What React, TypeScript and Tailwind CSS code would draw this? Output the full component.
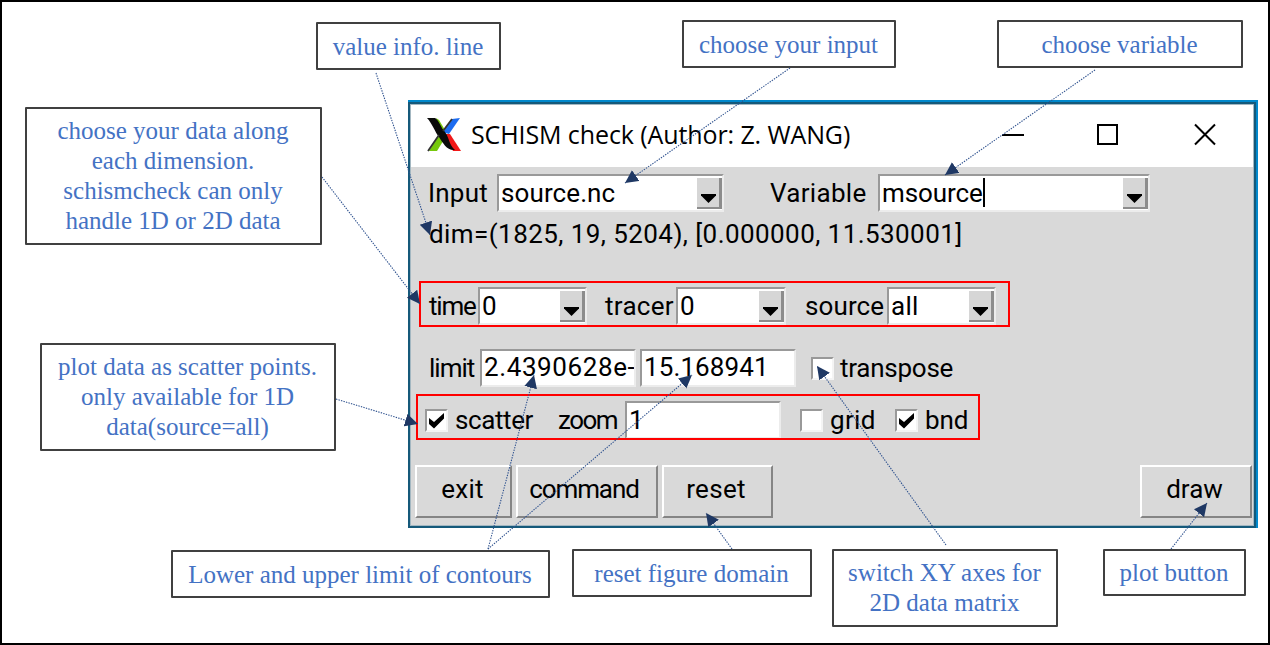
import type { ReactNode } from "react";

const INK = "#1f3864";

function Callout({ className, children }: { className: string; children: ReactNode }) {
  return (
    <div
      className={`absolute flex flex-col items-center justify-center whitespace-nowrap rounded-[1px] border-2 border-[#404040] bg-white pr-px text-center text-[25px] leading-[30px] text-[#4472c4] ${className}`}
    >
      {children}
    </div>
  );
}

function Label({ className, children }: { className: string; children: ReactNode }) {
  return <span className={`shrink-0 whitespace-nowrap pb-px ${className}`}>{children}</span>;
}

function Field({ className, children }: { className: string; children: ReactNode }) {
  return (
    <div
      className={`flex shrink-0 items-center overflow-hidden whitespace-nowrap border-2 border-b-[#ececec] border-l-[#999] border-r-[#ececec] border-t-[#999] bg-white pl-[2px] ${className}`}
    >
      {children}
    </div>
  );
}

function Combo({ className, children }: { className: string; children: ReactNode }) {
  return (
    <Field className={`h-[38px] justify-between ${className}`}>
      <span className="flex items-center pb-px">{children}</span>
      <span className="mt-px flex h-[31px] w-[25px] shrink-0 items-center justify-center border-b-2 border-r-[3px] border-[#8c8c8c] bg-[#d6d6d6]">
        <svg className="ml-px mt-[11px] h-[9px] w-[15px]" viewBox="0 0 15 9">
          <path d="M0 0H15V1.5L7.5 9L0 1.5Z" fill="#000" />
        </svg>
      </span>
    </Field>
  );
}

function Check({ checked = false, className = "" }: { checked?: boolean; className?: string }) {
  return (
    <span
      className={`flex h-[23px] w-[23px] shrink-0 items-center justify-center border-2 border-b-[#f4f4f4] border-l-[#999] border-r-[#f4f4f4] border-t-[#999] bg-white ${className}`}
    >
      {checked && (
        <svg className="mt-px h-[16px] w-[17px]" viewBox="0 0 17 16">
          <path d="M1 5L6 9L16 0V5.5L6 15.5L1 11Z" fill="#000" />
        </svg>
      )}
    </span>
  );
}

function Button({ className, children }: { className: string; children: ReactNode }) {
  return (
    <button
      className={`flex h-[53px] items-center justify-center border-2 border-b-[#858585] border-l-white border-r-[#858585] border-t-white pb-[5px] pr-[2px] ${className}`}
    >
      {children}
    </button>
  );
}

const arrows = [
  [376, 73, 430, 235],
  [790, 68, 625, 183],
  [1095, 70, 945, 175],
  [322, 177, 420, 304],
  [336, 399, 418, 424],
  [488, 549, 534, 375],
  [488, 549, 692, 375],
  [946, 545, 817, 366],
  [732, 549, 706, 513],
  [1171, 549, 1207, 503],
];

function Arrows() {
  return (
    <svg className="pointer-events-none absolute inset-0 h-[645px] w-[1270px]" viewBox="0 0 1270 645">
      <defs>
        <marker id="head" markerUnits="userSpaceOnUse" markerWidth="14" markerHeight="14" refX="13" refY="6.5" orient="auto">
          <path d="M0 0L13 6.5L0 13Z" fill={INK} />
        </marker>
      </defs>
      {arrows.map(([x1, y1, x2, y2]) => (
        <line
          key={`${x1}-${x2}`}
          x1={x1}
          y1={y1}
          x2={x2}
          y2={y2}
          stroke="#2f528f"
          strokeWidth="1.1"
          strokeDasharray="1.4 1.2"
          markerEnd="url(#head)"
        />
      ))}
    </svg>
  );
}

function XLogo() {
  return (
    <svg className="-mt-[3px] h-[35px] w-[34px] shrink-0" viewBox="0 0 34 35">
      <path d="M25 2L33 1L22 17L15 15Z" fill="#1c6cf0" />
      <path d="M12 17L18 21L10 34H2Z" fill="#76c80c" />
      <path d="M9 1L12 3L18 13L14 14Z" fill="#76c80c" />
      <path d="M18 17L23 17L34 34H26Z" fill="#f01818" />
      <path d="M0 1H8C12 3 14 11 18 15C22 20 22 28 28 33C20 34 16 26 12 20C8 15 5 6 0 1Z" fill="#0a0a0a" />
      <path d="M25 2L16 14M1 34L12 18" stroke="#333" strokeWidth="1.8" />
    </svg>
  );
}

function Window() {
  return (
    <div className="absolute left-[408px] top-[100px] h-[428px] w-[850px] border-r-2 border-t-2 border-[#0088cc] font-[Roboto,sans-serif] text-[26px] leading-[30px] tracking-[0.3px] text-black">
      <div className="flex h-[426px] flex-col border-2 border-[#15597a] bg-[#d9d9d9] shadow-[inset_0_0_0_1px_#a3b7c1]">
        <div className="mx-px mt-px flex h-[62px] shrink-0 items-center bg-white pb-px pl-[16px]">
          <XLogo />
          <span className="-mt-[3px] ml-[10px] w-[380px] whitespace-nowrap font-['Open_Sans',sans-serif] text-[25px] tracking-[-0.1px]">
            SCHISM check (Author: Z. WANG)
          </span>
          <svg className="-mt-[3px] ml-[151px] h-[24px] w-[216px] shrink-0" viewBox="0 0 216 24" fill="none" stroke="#000" strokeWidth="2">
            <path d="M0 13H22" />
            <rect x="96" y="3" width="19" height="19" />
            <path d="M193 2.5L213 22.5M213 2.5L193 22.5" />
          </svg>
        </div>

        <div className="mt-[7px] flex h-[38px] shrink-0 items-center pl-[18px]">
          <Label className="w-[69px] tracking-[0.2px]">Input</Label>
          <Combo className="w-[227px] tracking-[0.1px]">source.nc</Combo>
          <Label className="ml-[46px] w-[108px]">Variable</Label>
          <Combo className="w-[272px] tracking-[-0.1px]">
            msource
            <span className="h-[29px] w-[2px] bg-black" />
          </Combo>
        </div>

        <div className="mt-[7px] h-[31px] shrink-0 whitespace-nowrap pl-[19px] leading-[31px] tracking-[0.43px]">
          dim=(1825, 19, 5204), [0.000000, 11.530001]
        </div>

        <div className="ml-[9px] mt-[31px] flex h-[46px] w-[591px] shrink-0 items-center overflow-hidden border-2 border-[#ff0000] pl-[8px] pt-[4px]">
          <Label className="w-[49px] tracking-[-1.2px]">time</Label>
          <Combo className="w-[109px]">0</Combo>
          <Label className="ml-[18px] w-[71px]">tracer</Label>
          <Combo className="w-[110px]">0</Combo>
          <Label className="ml-[19px] w-[82px] tracking-[0.1px]">source</Label>
          <Combo className="w-[109px]">all</Combo>
        </div>

        <div className="mt-[22px] flex h-[38px] shrink-0 items-center pl-[19px]">
          <Label className="w-[51px] tracking-[-1px]">limit</Label>
          <Field className="h-[38px] w-[156px] pb-[2px] tracking-[0.6px]">2.4390628e-</Field>
          <Field className="ml-[4px] h-[38px] w-[156px] pb-[2px] tracking-[0.1px]">15.168941</Field>
          <Check className="ml-[15px]" />
          <Label className="ml-[6px] tracking-[-0.25px]">transpose</Label>
        </div>

        <div className="ml-[6px] mt-[7px] flex h-[46px] w-[564px] shrink-0 items-center overflow-hidden border-2 border-[#ff0000] pl-[7px] pt-[6px]">
          <Check checked />
          <Label className="ml-[7px] w-[103px] tracking-[-0.4px]">scatter</Label>
          <Label className="w-[67px] tracking-[-1.5px]">zoom</Label>
          <Field className="h-[38px] w-[156px] pb-px">1</Field>
          <Check className="ml-[19px]" />
          <Label className="ml-[7px] w-[65px]">grid</Label>
          <Check checked />
          <Label className="ml-[7px] tracking-[-0.1px]">bnd</Label>
        </div>

        <div className="mt-[25px] flex shrink-0 pl-[5px] pr-[2px]">
          <Button className="w-[97px]">exit</Button>
          <Button className="ml-[4px] w-[142px] pr-[6px] tracking-[-1.1px]">command</Button>
          <Button className="ml-[4px] w-[111px] pr-[3px]">reset</Button>
          <Button className="ml-auto w-[112px] pr-[3px] tracking-[0px]">draw</Button>
        </div>
      </div>
    </div>
  );
}

export default function App() {
  return (
    <main className="relative h-[645px] w-[1270px] overflow-hidden border-2 border-black bg-white font-['Liberation_Serif',serif]">
      <div className="absolute -left-[2px] -top-[2px] h-[645px] w-[1270px]">
        <Window />
        <Callout className="left-[316px] top-[22px] h-[48px] w-[185px] pt-[2px]">value info. line</Callout>
        <Callout className="left-[682px] top-[20px] h-[48px] w-[214px] pt-[2px]">choose your input</Callout>
        <Callout className="left-[997px] top-[20px] h-[48px] w-[246px] pt-[2px]">choose variable</Callout>
        <Callout className="left-[25px] top-[107px] h-[138px] w-[297px]">
          <span>choose your data along</span>
          <span>each dimension.</span>
          <span>schismcheck can only</span>
          <span>handle 1D or 2D data</span>
        </Callout>
        <Callout className="left-[40px] top-[343px] h-[108px] w-[296px]">
          <span>plot data as scatter points.</span>
          <span>only available for 1D</span>
          <span>data(source=all)</span>
        </Callout>
        <Callout className="left-[171px] top-[550px] h-[48px] w-[379px] pt-[2px]">Lower and upper limit of contours</Callout>
        <Callout className="left-[572px] top-[549px] h-[48px] w-[240px] pt-[2px]">reset figure domain</Callout>
        <Callout className="left-[832px] top-[549px] h-[78px] w-[226px]">
          <span>switch XY axes for</span>
          <span>2D data matrix</span>
        </Callout>
        <Callout className="left-[1103px] top-[549px] h-[47px] w-[143px] pt-px">plot button</Callout>
        <Arrows />
      </div>
    </main>
  );
}
